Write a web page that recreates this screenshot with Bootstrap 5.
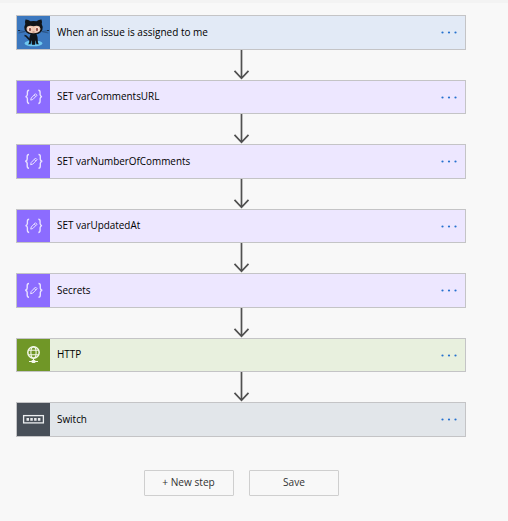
<!DOCTYPE html>
<html lang="en">
<head>
<meta charset="utf-8">
<meta name="viewport" content="width=device-width, initial-scale=1">
<title>Flow designer</title>
<link href="https://cdn.jsdelivr.net/npm/bootstrap@5.3.0/dist/css/bootstrap.min.css" rel="stylesheet">
<style>
body{background:#f8f8f8;font-family:"Open Sans","Noto Sans",sans-serif;font-size:11px;color:#000;height:521px;overflow:hidden}
.topline{height:3px;background:#f3f3f3}
.flow{width:450px;margin:12px 0 0 16px}
.step{height:35px;border:1px solid #c4c4c6;background:var(--tint)}
.step.short{height:34px}
.step-icon{width:33px;background:var(--tone)}
.step-icon svg{display:block}
.title{padding-left:7px;line-height:31px;white-space:nowrap}
.short .title{line-height:29px}
.title span{display:inline-block;transform:scaleX(.9);transform-origin:left center}
.title.w1 span{transform:scaleX(.91)}
.btn-flow span{display:inline-block;transform:scaleX(.92)}
.blue{--tone:#3c78bf;--tint:#e2eaf6}
.violet{--tone:#8c6cff;--tint:#ede7ff}
.green{--tone:#709727;--tint:#e8f0de}
.slate{--tone:#484f58;--tint:#e2e6ea}
.more{margin-right:7px;padding-bottom:1px}
.short .more{padding-bottom:0}
.arrow{height:30px}
.arrow svg,.more svg{display:block}
.foot{padding:33px 0 0 144px;gap:15px}
.btn-flow{width:90px;height:26px;border:1px solid #cfcfcf;border-radius:1px;font-size:11px;line-height:22px;padding:0 0 2px;color:#333}
</style>
</head>
<body>
<svg width="0" height="0" class="position-absolute">
<symbol id="arrow" viewBox="0 0 18 30"><path d="M9.500 0V28M2.500 20.800L9.500 28.300L16.500 20.800" fill="none" stroke="#505050" stroke-width="1.700"/></symbol>
<symbol id="dots" viewBox="0 0 18 4"><g fill="#2672cf"><circle cx="2.500" cy="2.500" r="1.100"/><circle cx="9" cy="2.500" r="1.100"/><circle cx="15.500" cy="2.500" r="1.100"/></g></symbol>
<symbol id="variable" viewBox="0 0 33 33"><g fill="none" stroke="#e9e2ff" stroke-width="1.400"><path d="M12 9.500C10.300 9.500 10.200 10.200 10.200 11.500V14Q10.200 15.800 8.300 16.200Q10.200 16.600 10.200 18.400V21C10.200 22.500 10.300 23.200 12 23.200M21.500 9.500C23.200 9.500 23.300 10.200 23.300 11.500V14Q23.300 15.800 25.200 16.200Q23.300 16.600 23.300 18.400V21C23.300 22.500 23.200 23.200 21.500 23.200"/><path d="M13.600 19.700L14.200 17.500L18.500 13.100L20.100 14.700L15.800 19.100ZM17.200 14.400L18.900 16.100" stroke-width="1"/></g></symbol>
</svg>
<div class="topline"></div>
<main>
<div class="flow d-flex flex-column">
 <div class="step blue d-flex align-items-stretch">
  <div class="step-icon"><svg width="33" height="33" viewBox="0 0 33 33">
   <ellipse cx="16.500" cy="27.300" rx="9" ry="3" fill="#70c8f0"/><ellipse cx="16.500" cy="27" rx="5" ry="1.500" fill="#4aa6da"/>
   <path d="M1 14.500L8 15.500M1.500 17L8 15.700M25 15.500L32 14.500M25 15.700L31.500 17" stroke="#274e7c" stroke-width=".8"/>
   <path d="M1 14.500h2M30 14.500h2" stroke="#172b43" stroke-width="1.200"/>
   <path d="M13.500 23.500C10.500 24 11 20 7.500 19.500" fill="none" stroke="#101820" stroke-width="1.700"/>
   <path d="M8.500 3.500Q11 3.300 13.500 5.300Q16.500 4.600 19.500 5.300Q22 3.300 24.500 3.500Q25.300 5.500 24.700 8Q26.300 10.500 25.300 14Q24 17.500 19.500 18.200L20.500 21L21 27L22 28.200H19.500L18.500 24L18 28.800H15L14.500 24L13.500 28.200H11L12.200 27L12.500 21L13.500 18.200Q9 17.500 7.700 14Q6.700 10.500 8.300 8Q7.700 5.500 8.500 3.500Z" fill="#101419"/>
   <path d="M10.500 10.500Q13 9.300 16.500 10.300Q20 9.300 22.500 10.500Q24.300 12.500 22.700 15.200Q20.500 17.300 16.500 17.200Q12.500 17.300 10.300 15.200Q8.700 12.500 10.500 10.500Z" fill="#efc8b2"/>
   <g fill="#fbeee8"><ellipse cx="12.800" cy="13.300" rx="1.800" ry="2.300"/><ellipse cx="20.200" cy="13.300" rx="1.800" ry="2.300"/></g><g fill="#9a5549"><ellipse cx="13" cy="13.500" rx="1.200" ry="1.700"/><ellipse cx="20" cy="13.500" rx="1.200" ry="1.700"/></g><path d="M15.500 16h2" stroke="#9a5549" stroke-width=".7"/>
  </svg></div>
  <div class="title w1 flex-grow-1"><span>When an issue is assigned to me</span></div><div class="more d-flex align-items-center"><svg width="18" height="4"><use href="#dots"/></svg></div>
 </div>
 <div class="arrow d-flex justify-content-center"><svg width="18" height="30"><use href="#arrow"/></svg></div>
 <div class="step short violet d-flex"><div class="step-icon"><svg width="33" height="32"><use href="#variable"/></svg></div><div class="title flex-grow-1"><span>SET varCommentsURL</span></div><div class="more d-flex align-items-center"><svg width="18" height="4"><use href="#dots"/></svg></div></div>
 <div class="arrow d-flex justify-content-center"><svg width="18" height="30"><use href="#arrow"/></svg></div>
 <div class="step violet d-flex"><div class="step-icon"><svg width="33" height="33"><use href="#variable"/></svg></div><div class="title flex-grow-1"><span>SET varNumberOfComments</span></div><div class="more d-flex align-items-center"><svg width="18" height="4"><use href="#dots"/></svg></div></div>
 <div class="arrow d-flex justify-content-center"><svg width="18" height="30"><use href="#arrow"/></svg></div>
 <div class="step short violet d-flex"><div class="step-icon"><svg width="33" height="32"><use href="#variable"/></svg></div><div class="title flex-grow-1"><span>SET varUpdatedAt</span></div><div class="more d-flex align-items-center"><svg width="18" height="4"><use href="#dots"/></svg></div></div>
 <div class="arrow d-flex justify-content-center"><svg width="18" height="30"><use href="#arrow"/></svg></div>
 <div class="step violet d-flex"><div class="step-icon"><svg width="33" height="33"><use href="#variable"/></svg></div><div class="title flex-grow-1"><span>Secrets</span></div><div class="more d-flex align-items-center"><svg width="18" height="4"><use href="#dots"/></svg></div></div>
 <div class="arrow d-flex justify-content-center"><svg width="18" height="30"><use href="#arrow"/></svg></div>
 <div class="step short green d-flex"><div class="step-icon"><svg width="33" height="32" viewBox="0 0 33 32"><g fill="none" stroke="#f4f8ea" stroke-width="1.100"><circle cx="16.500" cy="13.500" r="5.700" stroke-width="1.500"/><ellipse cx="16.500" cy="13.500" rx="2.600" ry="5.600"/><path d="M11.500 11.300H21.500M11.500 15.700H21.500M16.500 19.500V23M12 22.500H21"/></g><rect x="14.500" y="21" width="4" height="3" rx="1" fill="#f4f8ea"/></svg></div><div class="title flex-grow-1"><span>HTTP</span></div><div class="more d-flex align-items-center"><svg width="18" height="4"><use href="#dots"/></svg></div></div>
 <div class="arrow d-flex justify-content-center"><svg width="18" height="30"><use href="#arrow"/></svg></div>
 <div class="step slate d-flex"><div class="step-icon"><svg width="33" height="33" viewBox="0 0 33 33"><rect x="6.600" y="12.600" width="19.800" height="7.300" fill="none" stroke="#eceef0" stroke-width="1.300"/><g fill="#e6e8ea"><path d="M9.500 15h2.500v2.700H9.500zM13.300 15h2.500v2.700h-2.500zM17.100 15h2.500v2.700h-2.500zM20.900 15h2.500v2.700h-2.500z"/></g></svg></div><div class="title flex-grow-1"><span>Switch</span></div><div class="more d-flex align-items-center"><svg width="18" height="4"><use href="#dots"/></svg></div></div>
</div>
<div class="foot d-flex"><button class="btn btn-flow" type="button"><span>+ New step</span></button><button class="btn btn-flow" type="button"><span>Save</span></button></div>
</main>
<script src="https://cdn.jsdelivr.net/npm/bootstrap@5.3.0/dist/js/bootstrap.bundle.min.js"></script>
</body>
</html>
